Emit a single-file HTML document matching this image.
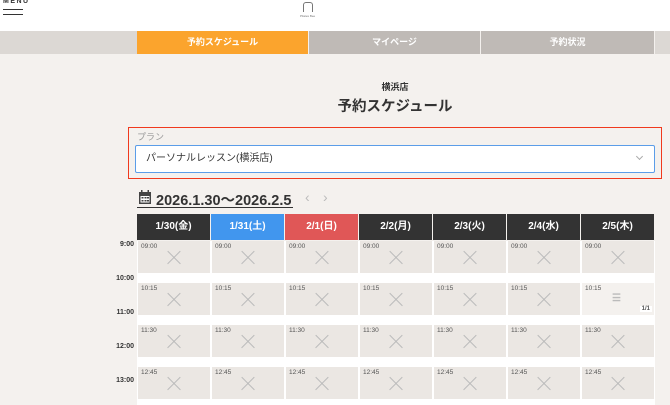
<html><head><style>
body{margin:0;width:670px;height:405px;overflow:hidden;background:#f4f1ee;font-family:"Liberation Sans","Noto Sans CJK JP",sans-serif;position:relative;color:#333}
.a{position:absolute}
.tab{position:absolute;top:31px;height:23px;line-height:23px;text-align:center;color:#fff;font-size:9px;font-weight:bold}
.dh{position:absolute;top:214px;height:26px;width:73px;line-height:26px;text-align:center;color:#fff;font-size:10px;font-weight:bold}
.c{position:absolute;width:72px;height:32px;background:#ebe7e3;font-size:6.5px;color:#555}
.c span{position:absolute;left:3px;top:2px}
.c i{position:absolute;left:29px;top:10px;width:14px;height:14px}
.c i:before,.c i:after{content:"";position:absolute;left:-2px;top:6px;width:18px;height:1.2px;background:#bbb;transform:rotate(45deg)}
.c i:after{transform:rotate(-45deg)}
.t{position:absolute;left:100px;width:34px;text-align:right;font-size:7px;font-weight:bold}
</style></head><body>
<div class="a" style="left:0;top:0;width:670px;height:31px;background:#fff"></div>
<div class="a" style="left:3px;top:-2px;font-size:7px;font-weight:bold;letter-spacing:1.5px">MENU</div>
<div class="a" style="left:3px;top:9px;width:20px;height:1px;background:#333"></div>
<div class="a" style="left:3px;top:14px;width:20px;height:1px;background:#333"></div>
<div class="a" style="left:303px;top:2px;width:8px;height:9px;border:1px solid #777;border-bottom:none;border-radius:3px 3px 0 0"></div>
<div class="a" style="left:300px;top:14px;font-size:3px;color:#777">Pilates Bee</div>
<div class="tab" style="left:0;width:137px;background:#dcd8d4"></div>
<div class="tab" style="left:137px;width:171px;background:#fba42d">予約スケジュール</div>
<div class="tab" style="left:309px;width:171px;background:#bfbab6">マイページ</div>
<div class="tab" style="left:481px;width:173px;background:#bfbab6">予約状況</div>
<div class="tab" style="left:655px;width:15px;background:#dcd8d4"></div>
<div class="a" style="left:0;width:790px;top:80px;text-align:center;font-size:9px;font-weight:bold">横浜店</div>
<div class="a" style="left:0;width:790px;top:95px;text-align:center;font-size:14.5px;font-weight:bold">予約スケジュール</div>
<div class="a" style="left:128px;top:127px;width:532px;height:50px;border:1.5px solid #f03a1e"></div>
<div class="a" style="left:137px;top:130px;font-size:9px;color:#999">プラン</div>
<div class="a" style="left:135px;top:145px;width:518px;height:26px;background:#fff;border:1px solid #5b9de8;border-radius:2px;font-size:10px;line-height:26px;text-indent:10px">パーソナルレッスン(横浜店)</div>
<div class="a" style="left:637px;top:154px;width:4px;height:4px;border-right:1px solid #aaa;border-bottom:1px solid #aaa;transform:rotate(45deg)"></div>
<svg class="a" style="left:138px;top:190px" width="14" height="15"><rect x="1" y="2" width="12" height="12" fill="#444"/><rect x="2.5" y="6" width="9" height="6.5" fill="#fff"/><g fill="#444"><rect x="3.5" y="7" width="2" height="1.5"/><rect x="6.5" y="7" width="2" height="1.5"/><rect x="9" y="7" width="2" height="1.5"/><rect x="3.5" y="10" width="2" height="1.5"/><rect x="6.5" y="10" width="2" height="1.5"/><rect x="9" y="10" width="2" height="1.5"/></g><rect x="3" y="0" width="1.5" height="3" fill="#444"/><rect x="9.5" y="0" width="1.5" height="3" fill="#444"/></svg>
<div class="a" style="left:156px;top:189px;font-size:14.5px;font-weight:bold">2026.1.30～2026.2.5</div>
<div class="a" style="left:137px;top:207px;width:156px;height:1px;background:#333"></div>
<div class="a" style="left:305px;top:189px;font-size:14px;color:#bbb">‹</div>
<div class="a" style="left:323px;top:189px;font-size:14px;color:#bbb">›</div>
<div class="a" style="left:137px;top:241px;width:518px;height:164px;background:#fff"></div>
<div class="dh" style="left:137px;background:#333">1/30(金)</div>
<div class="dh" style="left:211px;background:#4196ee">1/31(土)</div>
<div class="dh" style="left:285px;background:#e05757">2/1(日)</div>
<div class="dh" style="left:359px;background:#333">2/2(月)</div>
<div class="dh" style="left:433px;background:#333">2/3(火)</div>
<div class="dh" style="left:507px;background:#333">2/4(水)</div>
<div class="dh" style="left:581px;background:#333">2/5(木)</div>
<div class="t" style="top:241px">9:00</div><div class="t" style="top:275px">10:00</div><div class="t" style="top:309px">11:00</div><div class="t" style="top:343px">12:00</div><div class="t" style="top:377px">13:00</div>
<div id="g"></div>
<script>
var x=[137,211,285,359,433,507,581],r=[[241,'09:00'],[283,'10:15'],[325,'11:30'],[367,'12:45']],h='';
r.forEach(function(a){x.forEach(function(l,i){var sp=(a[1]=='10:15'&&i==6);h+='<div class="c" style="left:'+(l+1)+'px;top:'+a[0]+'px;'+(sp?'background:#f4f1ee':'')+'"><span>'+a[1]+'</span>'+(sp?'<b style="position:absolute;left:30px;top:10px;font-size:10px;color:#bbb">☰</b><b style="position:absolute;right:2px;top:23px;font-size:6px;background:#fff;padding:0 2px">1/1</b>':'<i></i>')+'</div>'})});
document.getElementById('g').innerHTML=h;
</script>
</body></html>
